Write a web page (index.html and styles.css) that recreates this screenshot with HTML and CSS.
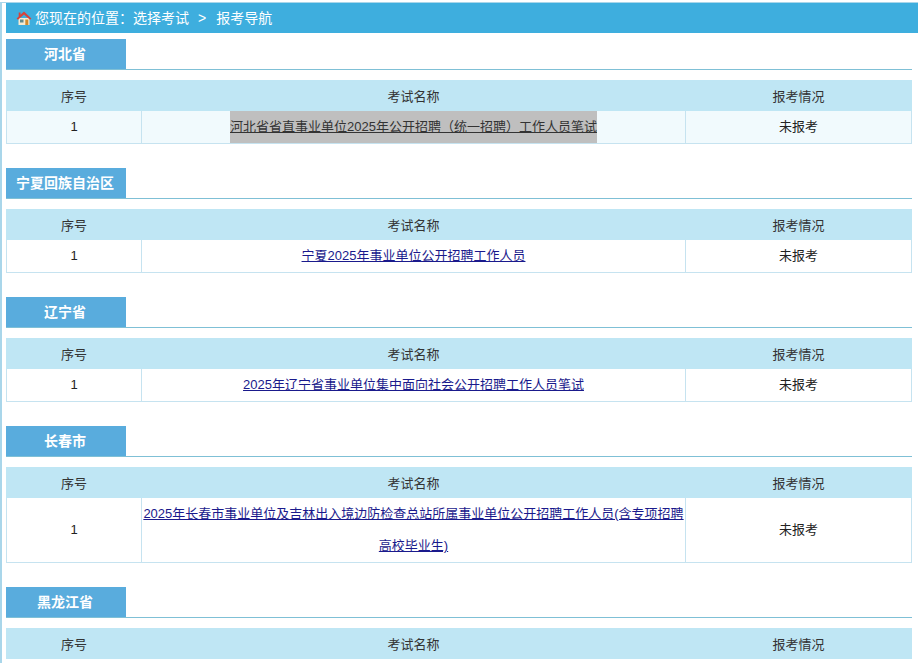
FILE: index.html
```html
<!DOCTYPE html>
<html lang="zh">
<head>
<meta charset="utf-8">
<title>报考导航</title>
<link rel="stylesheet" href="styles.css">
</head>
<body>
<div class="page">
  <div class="crumb">
    <svg class="home" viewBox="0 0 16 16" width="16" height="16" aria-hidden="true">
      <path d="M2.500 8h11v7h-11z" fill="#f6ead0"/>
      <path d="M8 1.500 4.500 4.700V2.500H2.700v3.900L.6 8.400 2 9.800l6-5.400 6 5.400 1.400-1.400z" fill="#d8423a"/>
      <path d="M9.300 9.500h3v5.500h-3z" fill="#d08a2c"/>
      <path d="M4 9.500h3.500v3H4z" fill="#5f8a8c"/>
    </svg>
    <span>您现在的位置：选择考试</span><span class="sep">&gt;</span><span>报考导航</span>
  </div>

  <section class="group">
    <div class="tabline"><h2 class="tab">河北省</h2></div>
    <table class="exam">
      <thead><tr><th class="c-no">序号</th><th class="c-name">考试名称</th><th class="c-state">报考情况</th></tr></thead>
      <tbody><tr class="active"><td>1</td><td><a class="hit" href="#">河北省省直事业单位2025年公开招聘（统一招聘）工作人员笔试</a></td><td>未报考</td></tr></tbody>
    </table>
  </section>

  <section class="group">
    <div class="tabline"><h2 class="tab">宁夏回族自治区</h2></div>
    <table class="exam">
      <thead><tr><th class="c-no">序号</th><th class="c-name">考试名称</th><th class="c-state">报考情况</th></tr></thead>
      <tbody><tr><td>1</td><td><a href="#">宁夏2025年事业单位公开招聘工作人员</a></td><td>未报考</td></tr></tbody>
    </table>
  </section>

  <section class="group">
    <div class="tabline"><h2 class="tab">辽宁省</h2></div>
    <table class="exam">
      <thead><tr><th class="c-no">序号</th><th class="c-name">考试名称</th><th class="c-state">报考情况</th></tr></thead>
      <tbody><tr><td>1</td><td><a href="#">2025年辽宁省事业单位集中面向社会公开招聘工作人员笔试</a></td><td>未报考</td></tr></tbody>
    </table>
  </section>

  <section class="group">
    <div class="tabline"><h2 class="tab">长春市</h2></div>
    <table class="exam">
      <thead><tr><th class="c-no">序号</th><th class="c-name">考试名称</th><th class="c-state">报考情况</th></tr></thead>
      <tbody><tr><td>1</td><td><a href="#">2025年长春市事业单位及吉林出入境边防检查总站所属事业单位公开招聘工作人员(含专项招聘高校毕业生)</a></td><td>未报考</td></tr></tbody>
    </table>
  </section>

  <section class="group">
    <div class="tabline"><h2 class="tab">黑龙江省</h2></div>
    <table class="exam">
      <thead><tr><th class="c-no">序号</th><th class="c-name">考试名称</th><th class="c-state">报考情况</th></tr></thead>
    </table>
  </section>
</div>
</body>
</html>
```

FILE: styles.css
```css
html, body {
  margin: 0;
  padding: 0;
  height: 663px;
  overflow: hidden;
  background: #fff;
}
body {
  font-family: "Liberation Sans", "Noto Sans CJK SC", sans-serif;
  font-size: 13px;
  color: #333;
}
.page {
  height: 661px;
  margin-top: 2px;
  padding-left: 4px;
  box-sizing: border-box;
  border-top: 1px solid #a9d6ea;
  border-left: 2px solid #a9d6ea;
}
.crumb {
  height: 30px;
  margin-bottom: 6px;
  padding-left: 10px;
  display: flex;
  align-items: center;
  background: #3eaede;
  color: #fff;
  font-size: 14px;
  line-height: 30px;
}
.home {
  margin: 0 3px 0 0;
  flex: none;
}
.sep {
  margin: 0 10px 0 9px;
}
.group {
  width: 906px;
  margin-bottom: 24px;
}
.tabline {
  border-bottom: 1px solid #7fc0d6;
  margin-bottom: 10px;
}
.tab {
  width: 118px;
  height: 30px;
  margin: 0;
  padding-right: 2px;
  background: #59acdd;
  color: #fff;
  font-size: 14px;
  font-weight: bold;
  line-height: 30px;
  text-align: center;
}
.exam {
  width: 906px;
  border-collapse: separate;
  border-spacing: 0;
  table-layout: fixed;
}
.exam th {
  height: 31px;
  padding: 0;
  border-left: 1px solid #bfe6f4;
  background: #bfe6f4;
  font-weight: normal;
  color: #333;
}
.exam th:last-child {
  border-right: 1px solid #bfe6f4;
}
.exam td {
  padding: 0;
  line-height: 32px;
  text-align: center;
  border-left: 1px solid #c6e3f0;
  border-bottom: 1px solid #c6e3f0;
  color: #222;
}
.exam td:last-child {
  border-right: 1px solid #c6e3f0;
}
.c-no { width: 134px; }
.c-state { width: 225px; }
.exam a {
  color: #1a1a8c;
}
.active td {
  background: #f1fafd;
}
.exam a.hit {
  display: inline-block;
  background: #bfbfbf;
  color: #333;
}
```
